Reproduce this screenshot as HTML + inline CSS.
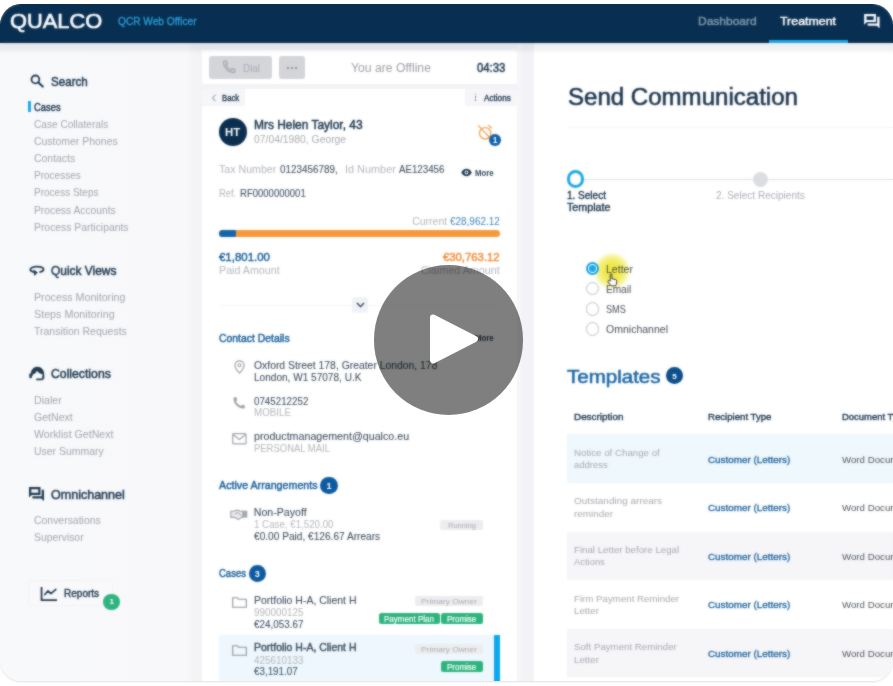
<!DOCTYPE html>
<html><head><meta charset="utf-8"><title>QCR Web Officer</title>
<style>
html,body{margin:0;padding:0;background:#fff;}
body{width:893px;height:686px;overflow:hidden;position:relative;font-family:"Liberation Sans",sans-serif;}
#app{position:absolute;left:0;top:4px;width:893px;height:677px;border-radius:21px;overflow:hidden;box-shadow:0 1px 2px rgba(0,0,0,0.12);}
#vid{position:absolute;left:0;top:-4px;width:893px;height:686px;will-change:transform;}
#soft{position:absolute;left:0;top:0;width:893px;height:677px;-webkit-backdrop-filter:blur(0.8px);backdrop-filter:blur(0.8px);opacity:0.6;}
#app>.r{margin-top:-4px;}
.t{position:absolute;white-space:nowrap;transform-origin:0 50%;}
.r{position:absolute;display:block;}
</style></head><body>
<div id="app"><div id="vid">
<div class="r" style="left:0.00px;top:4.00px;width:893.00px;height:677.00px;background:#f2f3f6;"></div>
<div class="r" style="left:0;top:4px;width:203px;height:677px;background:linear-gradient(90deg,#f8f9fb 0,#f8f8fa 187px,#f3f3f6 194px,#f2f3f6 203px);"></div>
<div class="r" style="left:534.00px;top:43.00px;width:359.00px;height:638.00px;background:#ffffff;"></div>
<div class="r" style="left:517.00px;top:43.00px;width:5.00px;height:638.00px;background:#f6f6f8;"></div>
<div class="r" style="left:0.00px;top:4.00px;width:893.00px;height:39.00px;background:#082f51;"></div>
<span class="t" style="left:10.20px;top:10.00px;font-size:21px;line-height:21px;color:#ffffff;-webkit-text-stroke:0.63px #ffffff;transform:scaleX(1.0396);">QUALCO</span>
<span class="t" style="left:118.00px;top:16.00px;font-size:10.5px;line-height:10.5px;color:#2a9fd8;-webkit-text-stroke:0.32px #2a9fd8;transform:scaleX(0.9656);">QCR Web Officer</span>
<span class="t" style="left:698.00px;top:16.00px;font-size:11.5px;line-height:11.5px;color:#7d94aa;-webkit-text-stroke:0.46px #7d94aa;transform:scaleX(1.0435);">Dashboard</span>
<span class="t" style="left:780.00px;top:16.00px;font-size:11.5px;line-height:11.5px;color:#ffffff;-webkit-text-stroke:0.46px #ffffff;transform:scaleX(1.0774);">Treatment</span>
<div class="r" style="left:769.00px;top:40.00px;width:79.00px;height:3.00px;background:#1ea7e4;"></div>
<svg class="r" style="left:864.1px;top:13.7px" width="16" height="14.7" viewBox="0 0 16 15"><path fill-rule="evenodd" fill="#ffffff" d="M0 0H12V8.200H2.800L0 11Z M2.400 2.200H9.700V6H2.400Z"/><path fill="#ffffff" d="M13.300 2.800H15.700V14.700L12.900 12H3.600V9.700H13.300Z"/></svg>
<svg class="r" style="left:30px;top:73.5px" width="14" height="14" viewBox="0 0 14 14"><circle cx="5.400" cy="5.400" r="3.900" fill="none" stroke="#1f3a52" stroke-width="1.800"/><path d="M8.400 8.400L12.700 12.600" stroke="#1f3a52" stroke-width="2.100" stroke-linecap="round"/></svg>
<span class="t" style="left:51.20px;top:75.00px;font-size:13px;line-height:13px;color:#1f3a52;-webkit-text-stroke:0.52px #1f3a52;transform:scaleX(0.8935);">Search</span>
<div class="r" style="left:28.00px;top:101.00px;width:3.00px;height:11.30px;background:#1ea7e4;"></div>
<span class="t" style="left:33.80px;top:102.00px;font-size:11.5px;line-height:11.5px;color:#1f3a52;-webkit-text-stroke:0.46px #1f3a52;transform:scaleX(0.8161);">Cases</span>
<span class="t" style="left:33.80px;top:119.00px;font-size:11px;line-height:11px;color:#a1a5ad;transform:scaleX(0.9195);">Case Collaterals</span>
<span class="t" style="left:33.80px;top:136.00px;font-size:11px;line-height:11px;color:#a1a5ad;transform:scaleX(0.9507);">Customer Phones</span>
<span class="t" style="left:33.80px;top:153.00px;font-size:11px;line-height:11px;color:#a1a5ad;transform:scaleX(0.9492);">Contacts</span>
<span class="t" style="left:33.80px;top:170.00px;font-size:11px;line-height:11px;color:#a1a5ad;transform:scaleX(0.9094);">Processes</span>
<span class="t" style="left:33.80px;top:187.00px;font-size:11px;line-height:11px;color:#a1a5ad;transform:scaleX(0.9095);">Process Steps</span>
<span class="t" style="left:33.80px;top:205.00px;font-size:11px;line-height:11px;color:#a1a5ad;transform:scaleX(0.9345);">Process Accounts</span>
<span class="t" style="left:33.80px;top:222.00px;font-size:11px;line-height:11px;color:#a1a5ad;transform:scaleX(0.9426);">Process Participants</span>
<span class="t" style="left:51.20px;top:264.00px;font-size:13px;line-height:13px;color:#1f3a52;-webkit-text-stroke:0.52px #1f3a52;transform:scaleX(0.9175);">Quick Views</span>
<span class="t" style="left:33.80px;top:292.00px;font-size:11px;line-height:11px;color:#a1a5ad;transform:scaleX(0.9708);">Process Monitoring</span>
<span class="t" style="left:33.80px;top:309.00px;font-size:11px;line-height:11px;color:#a1a5ad;transform:scaleX(0.9765);">Steps Monitoring</span>
<span class="t" style="left:33.80px;top:326.00px;font-size:11px;line-height:11px;color:#a1a5ad;transform:scaleX(0.9527);">Transition Requests</span>
<span class="t" style="left:51.20px;top:367.00px;font-size:13px;line-height:13px;color:#1f3a52;-webkit-text-stroke:0.52px #1f3a52;transform:scaleX(0.9405);">Collections</span>
<span class="t" style="left:33.80px;top:395.00px;font-size:11px;line-height:11px;color:#a1a5ad;transform:scaleX(0.9642);">Dialer</span>
<span class="t" style="left:33.80px;top:412.00px;font-size:11px;line-height:11px;color:#a1a5ad;transform:scaleX(0.9617);">GetNext</span>
<span class="t" style="left:33.80px;top:429.00px;font-size:11px;line-height:11px;color:#a1a5ad;transform:scaleX(0.9659);">Worklist GetNext</span>
<span class="t" style="left:33.80px;top:446.00px;font-size:11px;line-height:11px;color:#a1a5ad;transform:scaleX(0.9517);">User Summary</span>
<span class="t" style="left:51.20px;top:488.00px;font-size:13px;line-height:13px;color:#1f3a52;-webkit-text-stroke:0.52px #1f3a52;transform:scaleX(0.9635);">Omnichannel</span>
<span class="t" style="left:33.80px;top:515.00px;font-size:11px;line-height:11px;color:#a1a5ad;transform:scaleX(0.9487);">Conversations</span>
<span class="t" style="left:33.80px;top:532.00px;font-size:11px;line-height:11px;color:#a1a5ad;transform:scaleX(0.9434);">Supervisor</span>
<svg class="r" style="left:28px;top:264px" width="18" height="13" viewBox="0 0 18 13"><path d="M11.400 8.100C14 7.700 15.500 6.800 15.500 5.500 15.500 3.900 12.600 2.700 8.900 2.700S2.300 3.900 2.300 5.500C2.300 6.800 3.900 7.800 6.400 8.200" fill="none" stroke="#1f3a52" stroke-width="1.800"/><path d="M5.600 5.600L9.800 8.400 6.200 11.900Z" fill="#1f3a52"/></svg>
<svg class="r" style="left:29px;top:366px" width="16" height="15" viewBox="0 0 16 15"><path d="M1.800 10V8.500C1.800 3.800 4.500 0.700 8.400 0.700s6.800 3.100 6.800 7.800v3.700h-1.800V8C11 8 9 6.500 8 4.500 7.300 6.500 5.500 8.200 3.600 8.600V10z" fill="#1f3a52"/><rect x="0.300" y="7.600" width="2.600" height="4.600" rx="1" fill="#1f3a52"/><path d="M14.300 10V11.800Q14.300 13.300 12.800 13.300H7.200" fill="none" stroke="#1f3a52" stroke-width="1.700"/></svg>
<svg class="r" style="left:29.2px;top:486.5px" width="15.3" height="14.5" viewBox="0 0 16 15"><path fill-rule="evenodd" fill="#1f3a52" d="M0 0H12V8.200H2.800L0 11Z M2.400 2.200H9.700V6H2.400Z"/><path fill="#1f3a52" d="M13.300 2.800H15.700V14.700L12.900 12H3.600V9.700H13.300Z"/></svg>
<div class="r" style="left:29.00px;top:581.30px;width:82.90px;height:23.50px;background:#f9f9fb;border-radius:2px;box-shadow:0 0 0 1px #f2f2f5;"></div>
<svg class="r" style="left:40px;top:586px" width="18" height="16" viewBox="0 0 18 16"><path d="M1.550 0.900V14.050H17" fill="none" stroke="#1f3a52" stroke-width="1.800"/><path d="M4.700 8.700L8 4.800 10.900 7.600 15.900 3.400" fill="none" stroke="#1f3a52" stroke-width="1.600" stroke-linejoin="round" stroke-linecap="round"/></svg>
<span class="t" style="left:63.70px;top:589.00px;font-size:10.3px;line-height:10.3px;color:#1f3a52;-webkit-text-stroke:0.41px #1f3a52;transform:scaleX(0.9733);">Reports</span>
<div class="r" style="left:103.20px;top:593.60px;width:16.80px;height:16.80px;background:#2eb37f;border-radius:8.4px;"></div>
<span class="t" style="left:109.60px;top:598.00px;font-size:8px;line-height:8px;color:#ffffff;font-weight:700;">1</span>
<div class="r" style="left:202.00px;top:50.00px;width:315.00px;height:33.50px;background:#ffffff;border-radius:2px;"></div>
<div class="r" style="left:202.00px;top:89.30px;width:315.00px;height:591.70px;background:#ffffff;"></div>
<div class="r" style="left:208.60px;top:55.50px;width:63.80px;height:23.30px;background:#d4d5d9;border-radius:3px;"></div>
<div class="r" style="left:278.90px;top:55.50px;width:26.10px;height:23.30px;background:#d4d5d9;border-radius:3px;"></div>
<svg class="r" style="left:221.500px;top:60px" width="14" height="14" viewBox="0 0 14 14"><path d="M2.500 1.200c-.6 0-1 .4-1 1C1.600 7.800 6 12.400 11.800 12.500c.6 0 1-.4 1-1V9.600l-2.800-.9-1.300 1.300C6.800 9.100 4.900 7.200 4 5.300l1.300-1.300-.9-2.800z" fill="none" stroke="#a3a6ad" stroke-width="1.300" stroke-linejoin="round"/></svg>
<span class="t" style="left:243.00px;top:63.00px;font-size:11px;line-height:11px;color:#a9acb3;transform:scaleX(0.8971);">Dial</span>
<div class="r" style="left:286.75px;top:66.55px;width:2.10px;height:2.10px;background:#7b808a;border-radius:1.05px;"></div>
<div class="r" style="left:290.85px;top:66.55px;width:2.10px;height:2.10px;background:#7b808a;border-radius:1.05px;"></div>
<div class="r" style="left:294.95px;top:66.55px;width:2.10px;height:2.10px;background:#7b808a;border-radius:1.05px;"></div>
<span class="t" style="left:351.30px;top:62.00px;font-size:12.5px;line-height:12.5px;color:#9da0a6;transform:scaleX(0.9744);">You are Offline</span>
<span class="t" style="left:477.00px;top:62.00px;font-size:12px;line-height:12px;color:#1f3a52;-webkit-text-stroke:0.48px #1f3a52;transform:scaleX(0.9458);">04:33</span>
<div class="r" style="left:202.00px;top:89.30px;width:42.80px;height:16.30px;background:#f6f6f9;"></div>
<div class="r" style="left:464.50px;top:89.30px;width:52.50px;height:16.30px;background:#f6f6f9;"></div>
<svg class="r" style="left:211px;top:93.500px" width="6" height="8" viewBox="0 0 6 8"><path d="M4.500 0.800L1.500 4 4.500 7.200" fill="none" stroke="#6a7683" stroke-width="0.9"/></svg>
<span class="t" style="left:222.20px;top:94.00px;font-size:9px;line-height:9px;color:#1f3a52;-webkit-text-stroke:0.36px #1f3a52;transform:scaleX(0.8597);">Back</span>
<div class="r" style="left:474.70px;top:93.50px;width:1.80px;height:1.80px;background:#5f6b79;border-radius:0.9px;"></div>
<div class="r" style="left:474.70px;top:96.30px;width:1.80px;height:1.80px;background:#5f6b79;border-radius:0.9px;"></div>
<div class="r" style="left:474.70px;top:99.10px;width:1.80px;height:1.80px;background:#5f6b79;border-radius:0.9px;"></div>
<span class="t" style="left:484.20px;top:94.00px;font-size:9px;line-height:9px;color:#1f3a52;-webkit-text-stroke:0.36px #1f3a52;transform:scaleX(0.9081);">Actions</span>
<div class="r" style="left:218.70px;top:117.50px;width:28.60px;height:28.60px;background:#0b2e4f;border-radius:14.3px;"></div>
<span class="t" style="left:225.40px;top:127.00px;font-size:11.5px;line-height:11.5px;color:#ffffff;font-weight:700;transform:scaleX(0.9916);">HT</span>
<span class="t" style="left:253.80px;top:119.00px;font-size:12.5px;line-height:12.5px;color:#1f3a52;-webkit-text-stroke:0.50px #1f3a52;transform:scaleX(0.9551);">Mrs Helen Taylor, 43</span>
<span class="t" style="left:253.80px;top:134.00px;font-size:11px;line-height:11px;color:#a9acb2;transform:scaleX(0.9413);">07/04/1980, George</span>
<svg class="r" style="left:476px;top:123px" width="20" height="20" viewBox="0 0 20 20"><circle cx="9.200" cy="10.300" r="5.700" fill="none" stroke="#f2a255" stroke-width="1.300"/><path d="M2.200 2.400L14 15" stroke="#f2a255" stroke-width="1.300"/><path d="M12.600 2.600L15.600 4.900" stroke="#f2a255" stroke-width="1.300" stroke-linecap="round"/></svg>
<div class="r" style="left:489.10px;top:134.30px;width:11.80px;height:11.80px;background:#0d5fa8;border-radius:5.9px;"></div>
<span class="t" style="left:492.70px;top:136.00px;font-size:8.5px;line-height:8.5px;color:#ffffff;font-weight:700;">1</span>
<span class="t" style="left:219.00px;top:164.00px;font-size:10.5px;line-height:10.5px;color:#b3b7bd;transform:scaleX(1.0124);">Tax Number</span>
<span class="t" style="left:279.60px;top:164.00px;font-size:10.5px;line-height:10.5px;color:#3f4f61;-webkit-text-stroke:0.08px #3f4f61;transform:scaleX(0.9412);">0123456789,</span>
<span class="t" style="left:345.20px;top:164.00px;font-size:10.5px;line-height:10.5px;color:#b3b7bd;transform:scaleX(1.0364);">Id Number</span>
<span class="t" style="left:399.00px;top:164.00px;font-size:10.5px;line-height:10.5px;color:#3f4f61;-webkit-text-stroke:0.08px #3f4f61;transform:scaleX(0.9257);">AE123456</span>
<svg class="r" style="left:460.700px;top:168.200px" width="11" height="9" viewBox="0 0 11 9"><path d="M0.300 4.500C1.500 2 3.300 0.800 5.500 0.800S9.500 2 10.700 4.500C9.500 7 7.700 8.200 5.500 8.200S1.500 7 0.300 4.500z" fill="#1f3a52"/><circle cx="5.500" cy="4.500" r="1.900" fill="#fff"/><circle cx="5.500" cy="4.500" r="1" fill="#1f3a52"/></svg>
<span class="t" style="left:475.20px;top:169.00px;font-size:8.6px;line-height:8.6px;color:#34465a;font-weight:700;transform:scaleX(0.9102);">More</span>
<span class="t" style="left:219.00px;top:188.00px;font-size:10.5px;line-height:10.5px;color:#b3b7bd;transform:scaleX(0.8932);">Ref.</span>
<span class="t" style="left:240.00px;top:188.00px;font-size:10.5px;line-height:10.5px;color:#3f4f61;-webkit-text-stroke:0.08px #3f4f61;transform:scaleX(0.9076);">RF0000000001</span>
<span class="t" style="left:412.20px;top:216.00px;font-size:10.5px;line-height:10.5px;color:#b3b7bd;">Current</span>
<span class="t" style="left:449.80px;top:216.00px;font-size:10.5px;line-height:10.5px;color:#3f82b6;transform:scaleX(0.9477);">€28,962.12</span>
<div class="r" style="left:219.00px;top:230.00px;width:281.40px;height:7.20px;background:#f59a3c;border-radius:3.6px;"></div>
<div class="r" style="left:219.00px;top:230.00px;width:16.80px;height:7.20px;background:#1565a8;border-radius:3.6px;border-top-right-radius:1.500px;border-bottom-right-radius:1.500px;"></div>
<span class="t" style="left:219.00px;top:252.00px;font-size:11.5px;line-height:11.5px;color:#1b629c;-webkit-text-stroke:0.46px #1b629c;transform:scaleX(0.9950);">€1,801.00</span>
<span class="t" style="left:443.00px;top:252.00px;font-size:11.5px;line-height:11.5px;color:#f08c3a;-webkit-text-stroke:0.46px #f08c3a;transform:scaleX(0.9835);">€30,763.12</span>
<span class="t" style="left:219.00px;top:265.00px;font-size:10.5px;line-height:10.5px;color:#b3b7bd;transform:scaleX(1.0179);">Paid Amount</span>
<span class="t" style="left:421.00px;top:265.00px;font-size:10.5px;line-height:10.5px;color:#b3b7bd;transform:scaleX(1.0203);">Claimed Amount</span>
<div class="r" style="left:219.00px;top:305.00px;width:281.40px;height:1.00px;background:#f5f5f7;"></div>
<div class="r" style="left:352.30px;top:297.30px;width:15.40px;height:15.40px;background:#f1f2f6;border-radius:3px;"></div>
<svg class="r" style="left:355.500px;top:302px" width="9" height="6" viewBox="0 0 9 6"><path d="M1 1L4.500 4.600 8 1" fill="none" stroke="#1f3a52" stroke-width="1.300"/></svg>
<span class="t" style="left:219.00px;top:333.00px;font-size:11px;line-height:11px;color:#1b629c;-webkit-text-stroke:0.44px #1b629c;transform:scaleX(0.9466);">Contact Details</span>
<span class="t" style="left:475.20px;top:334.00px;font-size:8.6px;line-height:8.6px;color:#34465a;font-weight:700;transform:scaleX(0.9102);">More</span>
<svg class="r" style="left:233.500px;top:359.500px" width="11" height="14" viewBox="0 0 11 14"><path d="M5.500 0.800C2.900 0.800 0.900 2.800 0.900 5.300c0 3.200 4.600 7.900 4.600 7.900s4.600-4.700 4.600-7.900C10.100 2.800 8.100 0.800 5.500 0.800z" fill="none" stroke="#a0a3a9" stroke-width="1.200"/><circle cx="5.500" cy="5.300" r="1.500" fill="none" stroke="#a0a3a9" stroke-width="1.100"/></svg>
<span class="t" style="left:253.80px;top:360.00px;font-size:10.6px;line-height:10.6px;color:#3f4f61;-webkit-text-stroke:0.08px #3f4f61;transform:scaleX(0.9794);">Oxford Street 178, Greater London, 178</span>
<span class="t" style="left:253.80px;top:372.00px;font-size:10.6px;line-height:10.6px;color:#3f4f61;-webkit-text-stroke:0.08px #3f4f61;transform:scaleX(0.9502);">London, W1 57078, U.K</span>
<svg class="r" style="left:232px;top:396px" width="14" height="14" viewBox="0 0 14 14"><path d="M2.500 1.200c-.6 0-1 .4-1 1C1.600 7.800 6 12.400 11.800 12.500c.6 0 1-.4 1-1V9.600l-2.800-.9-1.300 1.300C6.800 9.100 4.900 7.200 4 5.300l1.300-1.300-.9-2.800z" fill="#a0a3a9"/></svg>
<span class="t" style="left:253.80px;top:396.00px;font-size:10.6px;line-height:10.6px;color:#3f4f61;-webkit-text-stroke:0.08px #3f4f61;transform:scaleX(0.9229);">0745212252</span>
<span class="t" style="left:253.80px;top:407.00px;font-size:10.5px;line-height:10.5px;color:#b3b7bd;transform:scaleX(0.9300);">MOBILE</span>
<svg class="r" style="left:232px;top:433px" width="15" height="12" viewBox="0 0 15 12"><rect x="0.700" y="0.700" width="13.300" height="10.200" rx="1" fill="none" stroke="#a0a3a9" stroke-width="1.200"/><path d="M1 1.500L7.300 6.500 13.700 1.500" fill="none" stroke="#a0a3a9" stroke-width="1.200"/></svg>
<span class="t" style="left:253.80px;top:431.00px;font-size:10.6px;line-height:10.6px;color:#3f4f61;-webkit-text-stroke:0.08px #3f4f61;transform:scaleX(1.0081);">productmanagement@qualco.eu</span>
<span class="t" style="left:253.80px;top:443.00px;font-size:10.5px;line-height:10.5px;color:#b3b7bd;transform:scaleX(0.9012);">PERSONAL MAIL</span>
<span class="t" style="left:219.00px;top:480.00px;font-size:11px;line-height:11px;color:#1b629c;-webkit-text-stroke:0.44px #1b629c;transform:scaleX(0.9716);">Active Arrangements</span>
<div class="r" style="left:320.40px;top:477.20px;width:17.20px;height:17.20px;background:#0d5aa0;border-radius:8.6px;"></div>
<span class="t" style="left:326.60px;top:482.00px;font-size:9px;line-height:9px;color:#ffffff;font-weight:700;">1</span>
<svg class="r" style="left:230px;top:509px" width="18" height="12" viewBox="0 0 18 12"><path d="M0.800 2.200H3.600L5.400 1.400H8.600L10 2.200H13V8.400H11.400L8.400 10.600 4.600 8.400H0.800Z" fill="#e9eaed" stroke="#9ea1a8" stroke-width="1.100" stroke-linejoin="round"/><path d="M12.600 1.700H17.300V8.600H12.600Z" fill="#a4a7ae"/><path d="M4.800 5.200L7.600 3.600 11.200 6.600" fill="none" stroke="#9ea1a8" stroke-width="1"/></svg>
<span class="t" style="left:253.80px;top:507.00px;font-size:10.6px;line-height:10.6px;color:#3f4f61;-webkit-text-stroke:0.08px #3f4f61;">Non-Payoff</span>
<span class="t" style="left:253.80px;top:519.00px;font-size:10.5px;line-height:10.5px;color:#b3b7bd;transform:scaleX(0.9265);">1 Case, €1,520.00</span>
<span class="t" style="left:253.80px;top:531.00px;font-size:10.6px;line-height:10.6px;color:#3f4f61;-webkit-text-stroke:0.08px #3f4f61;transform:scaleX(0.9561);">€0.00 Paid, €126.67 Arrears</span>
<div class="r" style="left:440.00px;top:519.50px;width:43.00px;height:10.20px;background:#ededf0;border-radius:2px;"></div>
<span class="t" style="left:447.50px;top:522.00px;font-size:8px;line-height:8px;color:#a9acb2;transform:scaleX(0.9396);">Running</span>
<span class="t" style="left:219.00px;top:568.00px;font-size:11px;line-height:11px;color:#1b629c;-webkit-text-stroke:0.44px #1b629c;transform:scaleX(0.8628);">Cases</span>
<div class="r" style="left:248.70px;top:564.70px;width:17.20px;height:17.20px;background:#0d5aa0;border-radius:8.6px;"></div>
<span class="t" style="left:254.80px;top:570.00px;font-size:9px;line-height:9px;color:#ffffff;font-weight:700;">3</span>
<svg class="r" style="left:232px;top:596.5px" width="15" height="11" viewBox="0 0 15 11"><path d="M0.700 10.300V0.700h4.500l1.300 1.500h7.800v8.100z" fill="none" stroke="#8e9299" stroke-width="1.100" stroke-linejoin="round"/></svg>
<span class="t" style="left:253.80px;top:595.00px;font-size:10.8px;line-height:10.8px;color:#3f4f61;-webkit-text-stroke:0.09px #3f4f61;transform:scaleX(0.9704);">Portfolio H-A, Client H</span>
<span class="t" style="left:253.80px;top:607.00px;font-size:10.5px;line-height:10.5px;color:#b3b7bd;transform:scaleX(0.9400);">990000125</span>
<span class="t" style="left:253.80px;top:619.00px;font-size:10.6px;line-height:10.6px;color:#3f4f61;-webkit-text-stroke:0.08px #3f4f61;transform:scaleX(0.9313);">€24,053.67</span>
<div class="r" style="left:415.00px;top:596.00px;width:68.00px;height:9.60px;background:#ededf0;border-radius:2px;"></div>
<span class="t" style="left:421.00px;top:598.00px;font-size:8px;line-height:8px;color:#a9acb2;transform:scaleX(1.0499);">Primary Owner</span>
<div class="r" style="left:378.50px;top:613.30px;width:61.30px;height:10.70px;background:#2db37e;border-radius:2.5px;"></div>
<span class="t" style="left:384.30px;top:615.00px;font-size:8.4px;line-height:8.4px;color:#ffffff;-webkit-text-stroke:0.17px #ffffff;transform:scaleX(0.9600);">Payment Plan</span>
<div class="r" style="left:440.70px;top:613.30px;width:42.30px;height:10.70px;background:#2db37e;border-radius:2.5px;"></div>
<span class="t" style="left:447.30px;top:615.00px;font-size:8.4px;line-height:8.4px;color:#ffffff;-webkit-text-stroke:0.17px #ffffff;transform:scaleX(0.9544);">Promise</span>
<div class="r" style="left:219.00px;top:635.30px;width:281.40px;height:45.70px;background:#eef7fd;"></div>
<div class="r" style="left:494.00px;top:635.30px;width:6.40px;height:45.70px;background:#0aa8ee;"></div>
<svg class="r" style="left:232px;top:644.5px" width="15" height="11" viewBox="0 0 15 11"><path d="M0.700 10.300V0.700h4.500l1.300 1.500h7.800v8.100z" fill="none" stroke="#8e9299" stroke-width="1.100" stroke-linejoin="round"/></svg>
<span class="t" style="left:253.80px;top:642.00px;font-size:10.8px;line-height:10.8px;color:#3f4f61;-webkit-text-stroke:0.43px #3f4f61;transform:scaleX(0.9704);">Portfolio H-A, Client H</span>
<span class="t" style="left:253.80px;top:655.00px;font-size:10.5px;line-height:10.5px;color:#b3b7bd;transform:scaleX(0.9400);">425610133</span>
<span class="t" style="left:253.80px;top:666.00px;font-size:10.6px;line-height:10.6px;color:#3f4f61;-webkit-text-stroke:0.08px #3f4f61;transform:scaleX(0.9268);">€3,191.07</span>
<div class="r" style="left:415.00px;top:644.00px;width:68.00px;height:9.80px;background:#ededf0;border-radius:2px;"></div>
<span class="t" style="left:421.00px;top:646.00px;font-size:8px;line-height:8px;color:#a9acb2;transform:scaleX(1.0499);">Primary Owner</span>
<div class="r" style="left:440.70px;top:661.30px;width:42.30px;height:10.40px;background:#2db37e;border-radius:2.5px;"></div>
<span class="t" style="left:447.30px;top:663.00px;font-size:8.4px;line-height:8.4px;color:#ffffff;-webkit-text-stroke:0.17px #ffffff;transform:scaleX(0.9544);">Promise</span>
<span class="t" style="left:567.80px;top:86.00px;font-size:23.5px;line-height:23.5px;color:#1b344d;-webkit-text-stroke:0.56px #1b344d;transform:scaleX(1.0233);">Send Communication</span>
<div class="r" style="left:567.00px;top:127.30px;width:326.00px;height:1.00px;background:#f4f4f6;"></div>
<div class="r" style="left:584.00px;top:178.50px;width:309.00px;height:1.50px;background:#dfe0e4;"></div>
<div class="r" style="left:566.80px;top:170.40px;width:17.60px;height:17.60px;background:#ffffff;border-radius:8.8px;box-sizing:border-box;border:3.200px solid #1ea7e4;"></div>
<div class="r" style="left:752.90px;top:171.60px;width:15.20px;height:15.20px;background:#dcdde2;border-radius:7.6px;"></div>
<span class="t" style="left:567.00px;top:191.00px;font-size:10px;line-height:10px;color:#1f3a52;-webkit-text-stroke:0.40px #1f3a52;">1. Select</span>
<span class="t" style="left:567.00px;top:203.00px;font-size:10px;line-height:10px;color:#1f3a52;-webkit-text-stroke:0.40px #1f3a52;transform:scaleX(1.0721);">Template</span>
<span class="t" style="left:716.00px;top:191.00px;font-size:10px;line-height:10px;color:#adb0b7;transform:scaleX(1.0048);">2. Select Recipients</span>
<div class="r" style="left:593.200px;top:252.200px;width:38px;height:38px;border-radius:50%;background:radial-gradient(circle closest-side,rgba(238,228,30,0.900) 0,rgba(238,229,40,0.800) 45%,rgba(240,232,60,0.550) 75%,rgba(242,236,90,0) 100%);"></div>
<div class="r" style="left:585.50px;top:261.50px;width:13.80px;height:13.80px;background:#ffffff;border-radius:6.9px;box-sizing:border-box;border:2px solid #12a2e6;"></div>
<div class="r" style="left:588.90px;top:264.90px;width:7.00px;height:7.00px;background:#1ea7e4;border-radius:3.5px;"></div>
<div class="r" style="left:585.50px;top:281.70px;width:13.80px;height:13.80px;background:#ffffff;border-radius:6.9px;box-sizing:border-box;border:1.500px solid #bcbfc6;"></div>
<div class="r" style="left:585.50px;top:301.80px;width:13.80px;height:13.80px;background:#ffffff;border-radius:6.9px;box-sizing:border-box;border:1.500px solid #bcbfc6;"></div>
<div class="r" style="left:585.50px;top:322.00px;width:13.80px;height:13.80px;background:#ffffff;border-radius:6.9px;box-sizing:border-box;border:1.500px solid #bcbfc6;"></div>
<span class="t" style="left:606.30px;top:264.00px;font-size:11px;line-height:11px;color:#4a5058;transform:scaleX(0.9600);">Letter</span>
<span class="t" style="left:606.30px;top:284.00px;font-size:11px;line-height:11px;color:#4a5058;transform:scaleX(0.9162);">Email</span>
<span class="t" style="left:606.30px;top:304.00px;font-size:11px;line-height:11px;color:#4a5058;transform:scaleX(0.8348);">SMS</span>
<span class="t" style="left:606.30px;top:324.00px;font-size:11px;line-height:11px;color:#4a5058;transform:scaleX(0.9567);">Omnichannel</span>
<svg class="r" style="left:606.500px;top:272.800px" width="11" height="14" viewBox="0 0 11 14"><path d="M3.200 8.200V1.600c0-1.200 1.700-1.200 1.700 0v4.200l3.700.7c.9.200 1.300.8 1.200 1.700l-.5 3.300c-.1.800-.6 1.300-1.400 1.300H4.700c-.6 0-1-.3-1.400-.8L.9 8.900c-.6-.9.500-1.800 1.300-1.100z" fill="#fff" stroke="#222" stroke-width="0.900" stroke-linejoin="round"/></svg>
<span class="t" style="left:567.00px;top:367.00px;font-size:19px;line-height:19px;color:#1a66a4;-webkit-text-stroke:0.53px #1a66a4;transform:scaleX(1.0798);">Templates</span>
<div class="r" style="left:666.10px;top:367.30px;width:16.60px;height:16.60px;background:#0d4f8c;border-radius:8.3px;"></div>
<span class="t" style="left:672.20px;top:373.00px;font-size:8px;line-height:8px;color:#ffffff;font-weight:700;">5</span>
<span class="t" style="left:573.60px;top:412.00px;font-size:9.5px;line-height:9.5px;color:#1f3a52;-webkit-text-stroke:0.38px #1f3a52;transform:scaleX(1.0396);">Description</span>
<span class="t" style="left:707.60px;top:412.00px;font-size:9.5px;line-height:9.5px;color:#1f3a52;-webkit-text-stroke:0.38px #1f3a52;transform:scaleX(1.0117);">Recipient Type</span>
<span class="t" style="left:841.60px;top:412.00px;font-size:9.5px;line-height:9.5px;color:#1f3a52;-webkit-text-stroke:0.38px #1f3a52;transform:scaleX(0.9946);">Document Type</span>
<div class="r" style="left:567.00px;top:434.40px;width:326.00px;height:48.60px;background:#eff8fd;"></div>
<span class="t" style="left:573.60px;top:448.00px;font-size:9.5px;line-height:9.5px;color:#a6aab0;transform:scaleX(1.0219);">Notice of Change of</span>
<span class="t" style="left:573.60px;top:460.00px;font-size:9.5px;line-height:9.5px;color:#a6aab0;transform:scaleX(0.9942);">address</span>
<span class="t" style="left:707.60px;top:455.00px;font-size:9.8px;line-height:9.8px;color:#1b629c;-webkit-text-stroke:0.29px #1b629c;transform:scaleX(1.0063);">Customer (Letters)</span>
<span class="t" style="left:841.70px;top:455.00px;font-size:9.4px;line-height:9.4px;color:#4f555c;transform:scaleX(1.0334);">Word Document</span>
<div class="r" style="left:567.00px;top:483.00px;width:326.00px;height:48.70px;background:#ffffff;"></div>
<span class="t" style="left:573.60px;top:496.00px;font-size:9.5px;line-height:9.5px;color:#a6aab0;transform:scaleX(1.0494);">Outstanding arrears</span>
<span class="t" style="left:573.60px;top:509.00px;font-size:9.5px;line-height:9.5px;color:#a6aab0;transform:scaleX(1.0432);">reminder</span>
<span class="t" style="left:707.60px;top:503.00px;font-size:9.8px;line-height:9.8px;color:#1b629c;-webkit-text-stroke:0.29px #1b629c;transform:scaleX(1.0063);">Customer (Letters)</span>
<span class="t" style="left:841.70px;top:503.00px;font-size:9.4px;line-height:9.4px;color:#4f555c;transform:scaleX(1.0334);">Word Document</span>
<div class="r" style="left:567.00px;top:531.70px;width:326.00px;height:48.50px;background:#f6f6f9;"></div>
<span class="t" style="left:573.60px;top:545.00px;font-size:9.5px;line-height:9.5px;color:#a6aab0;transform:scaleX(1.0206);">Final Letter before Legal</span>
<span class="t" style="left:573.60px;top:557.00px;font-size:9.5px;line-height:9.5px;color:#a6aab0;transform:scaleX(0.9887);">Actions</span>
<span class="t" style="left:707.60px;top:552.00px;font-size:9.8px;line-height:9.8px;color:#1b629c;-webkit-text-stroke:0.29px #1b629c;transform:scaleX(1.0063);">Customer (Letters)</span>
<span class="t" style="left:841.70px;top:552.00px;font-size:9.4px;line-height:9.4px;color:#4f555c;transform:scaleX(1.0334);">Word Document</span>
<div class="r" style="left:567.00px;top:580.20px;width:326.00px;height:48.60px;background:#ffffff;"></div>
<span class="t" style="left:573.60px;top:594.00px;font-size:9.5px;line-height:9.5px;color:#a6aab0;transform:scaleX(1.0210);">Firm Payment Reminder</span>
<span class="t" style="left:573.60px;top:606.00px;font-size:9.5px;line-height:9.5px;color:#a6aab0;transform:scaleX(1.0251);">Letter</span>
<span class="t" style="left:707.60px;top:600.00px;font-size:9.8px;line-height:9.8px;color:#1b629c;-webkit-text-stroke:0.29px #1b629c;transform:scaleX(1.0063);">Customer (Letters)</span>
<span class="t" style="left:841.70px;top:600.00px;font-size:9.4px;line-height:9.4px;color:#4f555c;transform:scaleX(1.0334);">Word Document</span>
<div class="r" style="left:567.00px;top:628.80px;width:326.00px;height:48.60px;background:#f6f6f9;"></div>
<span class="t" style="left:573.60px;top:642.00px;font-size:9.5px;line-height:9.5px;color:#a6aab0;transform:scaleX(1.0194);">Soft Payment Reminder</span>
<span class="t" style="left:573.60px;top:655.00px;font-size:9.5px;line-height:9.5px;color:#a6aab0;transform:scaleX(1.0251);">Letter</span>
<span class="t" style="left:707.60px;top:649.00px;font-size:9.8px;line-height:9.8px;color:#1b629c;-webkit-text-stroke:0.29px #1b629c;transform:scaleX(1.0063);">Customer (Letters)</span>
<span class="t" style="left:841.70px;top:649.00px;font-size:9.4px;line-height:9.4px;color:#4f555c;transform:scaleX(1.0334);">Word Document</span>
<div class="r" style="left:0;top:43px;width:893px;height:11px;background:linear-gradient(rgba(15,25,60,0.080) 0,rgba(15,25,60,0.055) 55%,rgba(15,25,60,0) 100%);"></div>
</div><div id="soft"></div>
<div class="r" style="left:373.70px;top:265.10px;width:149.60px;height:149.60px;background:rgba(0,0,0,0.5);border-radius:74.8px;"></div>
<svg class="r" style="left:425.200px;top:309.400px" width="60" height="60" viewBox="0 0 60 60"><path d="M8 8.500L50 30 8 51.500z" fill="#fff" stroke="#fff" stroke-width="6" stroke-linejoin="round"/></svg>
</div>
</body></html>
